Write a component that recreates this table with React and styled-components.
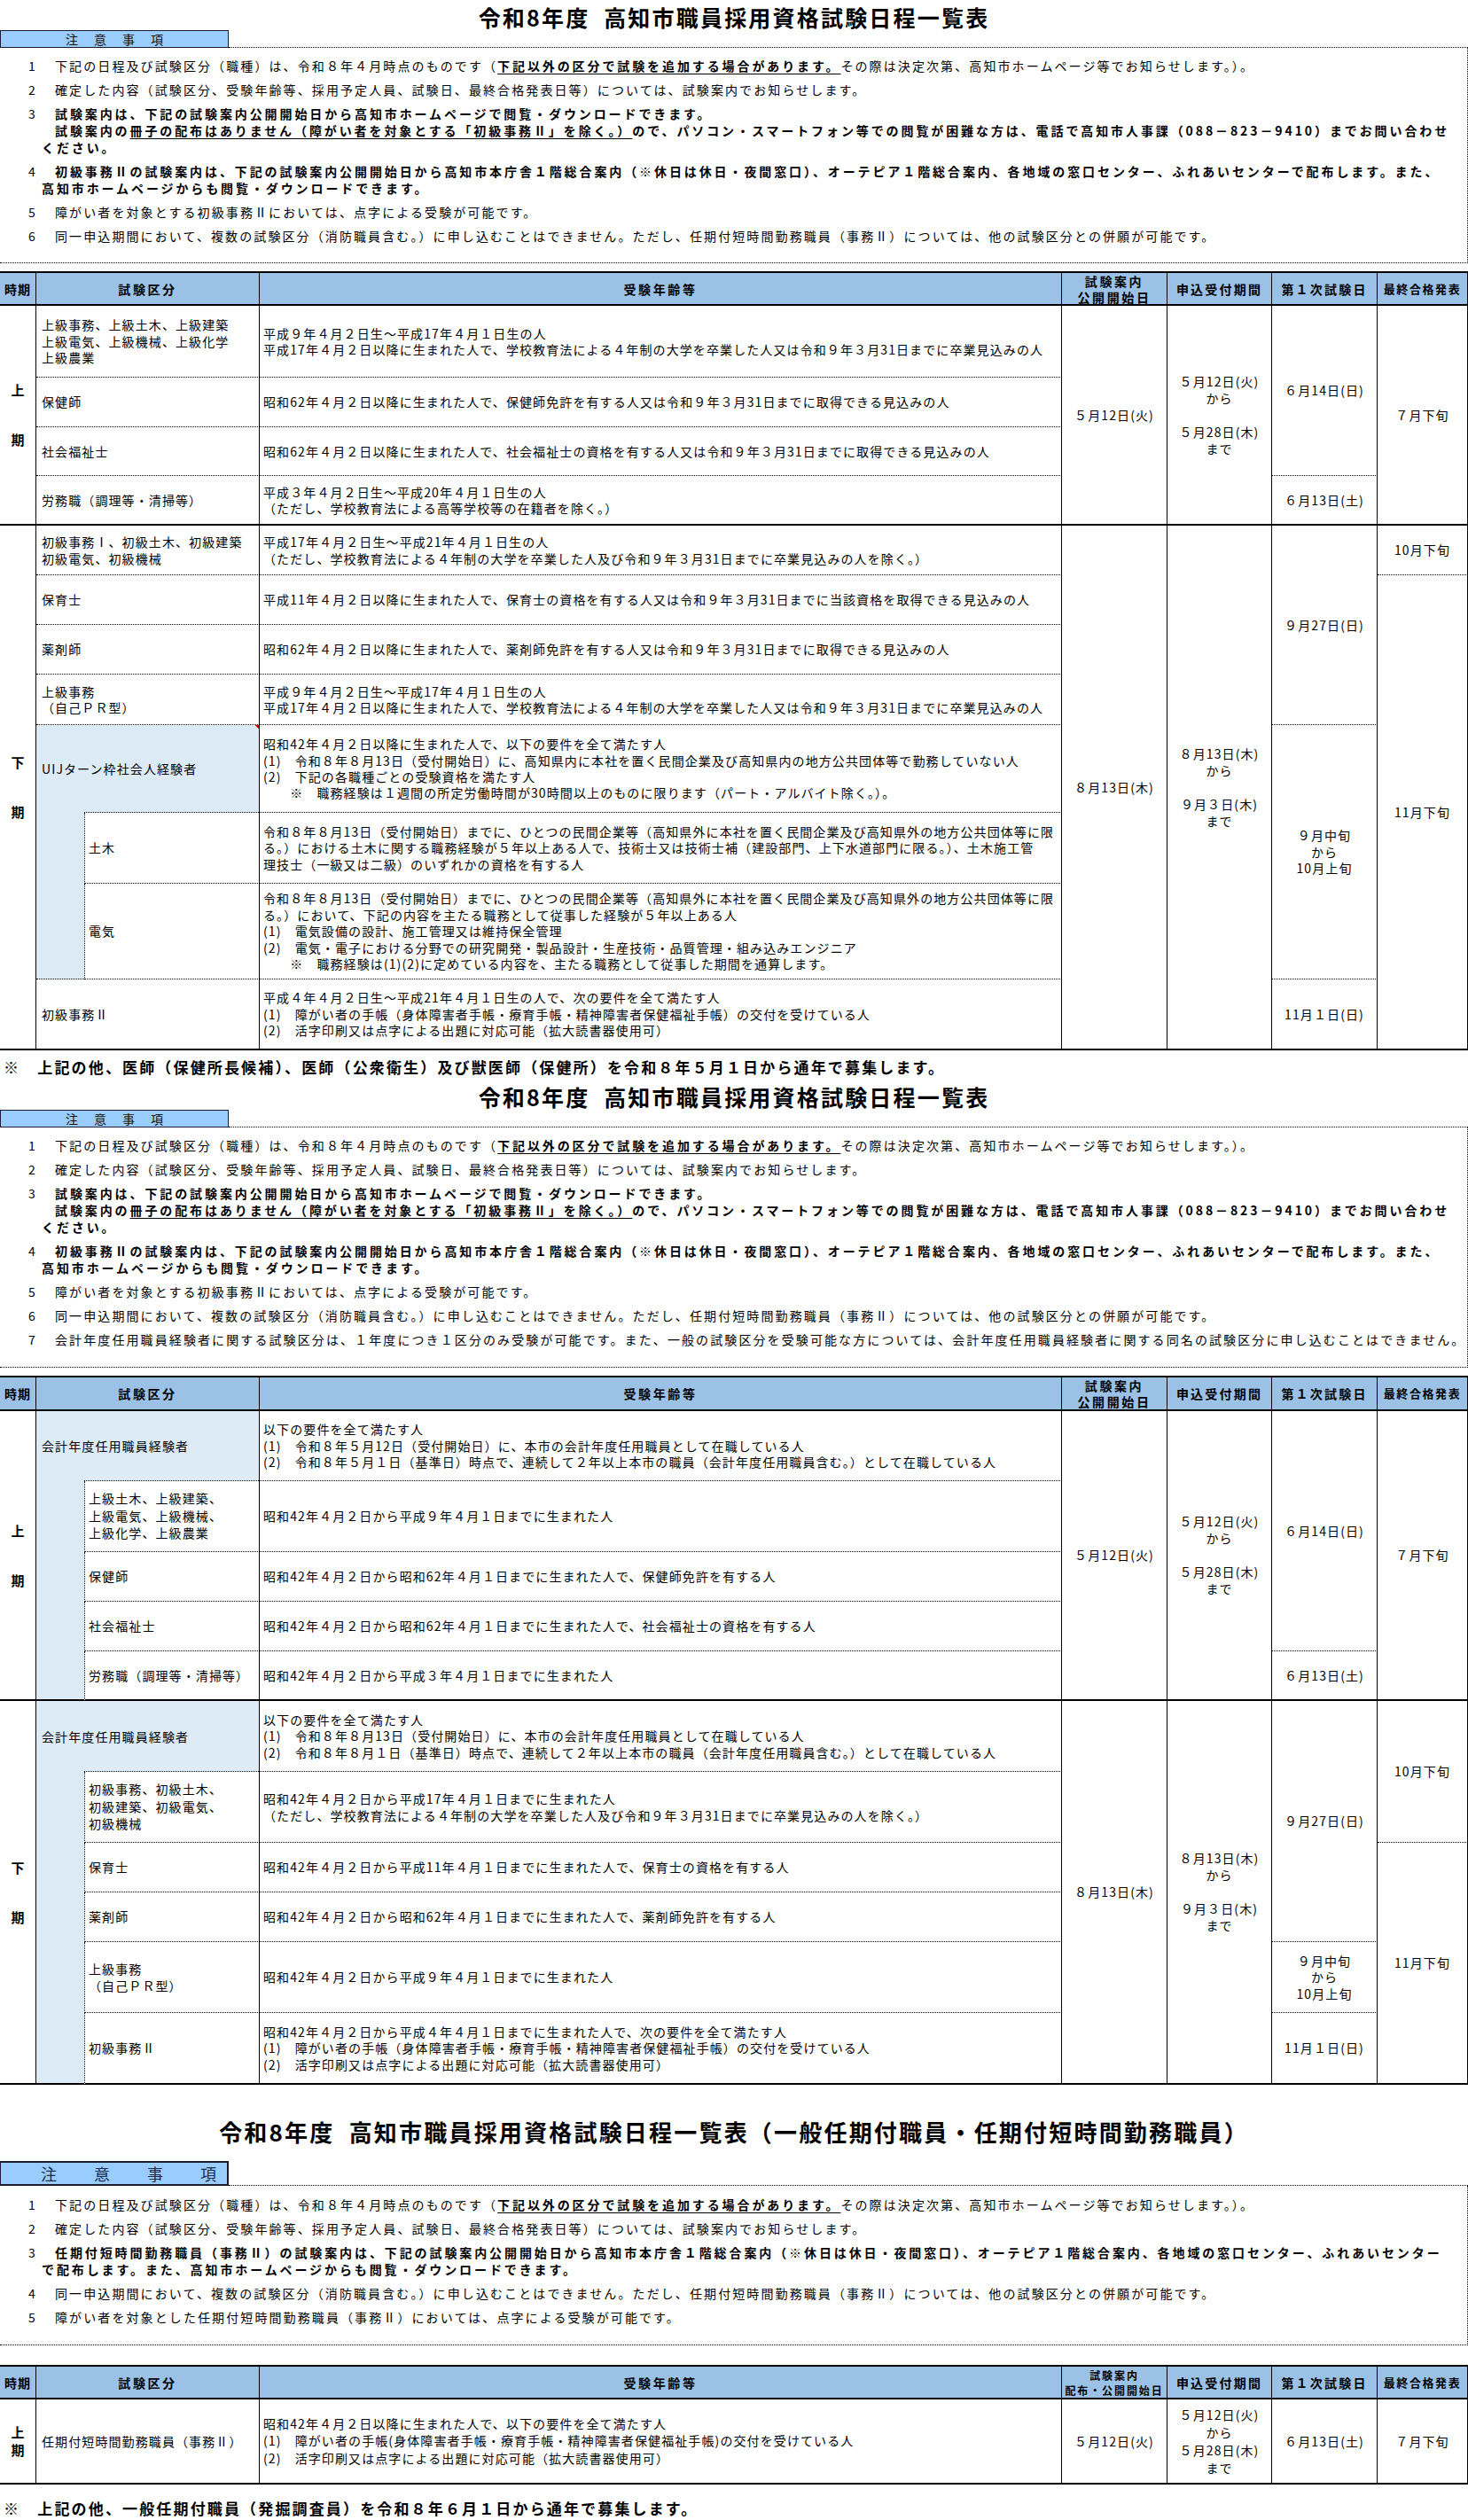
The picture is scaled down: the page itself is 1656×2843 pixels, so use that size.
import React from 'react';
import styled, { createGlobalStyle, css } from 'styled-components';

const FONT = `"Noto Sans CJK JP", "Noto Sans JP", "Noto Sans", sans-serif`;

const GlobalStyle = createGlobalStyle`
  html, body { margin: 0; padding: 0; background: #ffffff; }
  body { font-family: ${FONT}; color: #000; }
`;

const Page = styled.main`
  width: 1656px;
  min-height: 2843px;
  display: flex;
  flex-direction: column;
  font-family: ${FONT};
  color: #000;
`;

const Title = styled.h1`
  margin: 0;
  box-sizing: border-box;
  height: ${p => p.$h}px;
  padding-bottom: ${p => p.$pb || 0}px;
  display: flex;
  align-items: flex-end;
  justify-content: center;
  font-size: ${p => p.$fs || 25}px;
  letter-spacing: ${p => p.$ls ?? 2.2}px;
  line-height: 30px;
  font-weight: 700;
  white-space: pre;
`;

const NotesHead = styled.div`
  display: flex;
  height: ${p => p.$h}px;
`;

const NotesLabel = styled.div`
  box-sizing: border-box;
  width: 258px;
  border: ${p => p.$bw}px solid #1b1b34;
  border-left-width: 1px;
  background: #99ccff;
  display: flex;
  align-items: center;
  padding-left: ${p => p.$pl}px;
  font-size: ${p => p.$fs}px;
  letter-spacing: ${p => p.$ls}px;
  color: ${p => p.$color || '#111'};
  white-space: pre;
  line-height: 1;
`;

const NotesRule = styled.div`
  flex: 1;
  border-bottom: 1px dotted #000;
`;

const NoteList = styled.div`
  box-sizing: border-box;
  height: ${p => p.$h}px;
  padding: ${p => p.$pt || 11}px 0 0 32px;
  border-right: 1px dotted #000;
  border-bottom: 1px dotted #000;
  display: flex;
  flex-direction: column;
  gap: 8px;
  font-size: 14px;
  line-height: 19px;
`;

const NoteItem = styled.div`
  font-weight: ${p => (p.$bold ? 700 : 400)};
  letter-spacing: ${p => (p.$bold ? 2.9 : 2.1)}px;
`;

const NoteLine = styled.div`
  white-space: pre;
  padding-left: ${p => p.$indent || 0}px;
`;

const Num = styled.span`
  display: inline-block;
  width: 30px;
  font-weight: 400;
  letter-spacing: 0;
`;

const Em = styled.span`
  font-weight: 700;
  letter-spacing: 2.9px;
  text-decoration: underline;
  text-decoration-thickness: 1px;
  text-underline-offset: 3px;
`;

const Table = styled.div`
  display: grid;
  grid-template-columns: 41px 54px 198px 905px 119px 118px 119px 102px;
  grid-template-rows: ${p => p.$rows};
  margin-top: ${p => p.$mt}px;
  font-size: 14px;
  letter-spacing: 1.1px;
  line-height: 18.4px;
`;

const cellBase = css`
  box-sizing: border-box;
  grid-column: ${p => p.$c || 1} / span ${p => p.$cs || 1};
  grid-row: ${p => p.$r} / span ${p => p.$rs || 1};
  border-right: 1px solid #000;
  border-bottom: ${p => (p.$bb === 'solid' ? '2px solid #000' : '1px dotted #000')};
  display: flex;
  align-items: center;
  white-space: pre;
  min-width: 0;
  line-height: ${p => (p.$lh ? `${p.$lh}px` : 'inherit')};
`;

const HeadCell = styled.div`
  ${cellBase}
  border-top: 2px solid #000;
  border-bottom: 2px solid #000;
  background: #9bc2e6;
  justify-content: center;
  text-align: center;
  font-weight: 700;
  font-size: ${p => p.$fs || 14}px;
  letter-spacing: ${p => p.$ls ?? 2.6}px;
  line-height: ${p => p.$lh || 18}px;
`;

const TimeCell = styled.div`
  ${cellBase}
  justify-content: center;
  text-align: center;
  font-weight: 700;
  font-size: 15px;
  letter-spacing: 0;
`;

const KubunCell = styled.div`
  ${cellBase}
  padding-left: ${p => (p.$sub ? 4 : 6)}px;
  border-left: ${p => (p.$sub ? '1px dotted #000' : 'none')};
`;

const GroupCell = styled.div`
  ${cellBase}
  border-bottom: none;
  padding-left: 6px;
  background-color: #ddebf7;
  background-image: ${p => (p.$flag ? 'linear-gradient(225deg, #e00000 0 3.5px, transparent 3.5px), ' : '')}repeating-linear-gradient(to right, #000 0 1px, transparent 1px 2px);
  background-size: ${p => (p.$flag ? '6px 6px, ' : '')}calc(100% - 54px) 1px;
  background-position: ${p => (p.$flag ? 'right top, ' : '')}right bottom;
  background-repeat: no-repeat;
`;

const SideCell = styled.div`
  ${cellBase}
  border-right: none;
  background: #ddebf7;
`;

const AgeCell = styled.div`
  ${cellBase}
  padding-left: 4px;
`;

const DateCell = styled.div`
  ${cellBase}
  justify-content: center;
  text-align: center;
`;

const Footer = styled.p`
  margin: ${p => p.$mt}px 0 0;
  padding-left: 4px;
  font-size: 17px;
  font-weight: 700;
  letter-spacing: 2.15px;
  line-height: 20px;
  white-space: pre;
`;

const TITLE = '令和8年度  高知市職員採用資格試験日程一覧表';

function NoteOne() {
  return (
    <NoteItem>
      <NoteLine>
        <Num>1</Num>下記の日程及び試験区分（職種）は、令和８年４月時点のものです（<Em>下記以外の区分で試験を追加する場合があります。</Em>その際は決定次第、高知市ホームページ等でお知らせします。）。
      </NoteLine>
    </NoteItem>
  );
}

function NoteTwo() {
  return (
    <NoteItem>
      <NoteLine>
        <Num>2</Num>確定した内容（試験区分、受験年齢等、採用予定人員、試験日、最終合格発表日等）については、試験案内でお知らせします。
      </NoteLine>
    </NoteItem>
  );
}

function NoteGuide() {
  return (
    <NoteItem $bold>
      <NoteLine>
        <Num>3</Num>試験案内は、下記の試験案内公開開始日から高知市ホームページで閲覧・ダウンロードできます。
      </NoteLine>
      <NoteLine $indent={30}>
        試験案内の<Em>冊子の配布はありません（障がい者を対象とする「初級事務Ⅱ」を除く。）</Em>ので、パソコン・スマートフォン等での閲覧が困難な方は、電話で高知市人事課（088－823－9410）までお問い合わせ
      </NoteLine>
      <NoteLine $indent={15}>ください。</NoteLine>
    </NoteItem>
  );
}

function NoteDistribute() {
  return (
    <NoteItem $bold>
      <NoteLine>
        <Num>4</Num>初級事務Ⅱの試験案内は、下記の試験案内公開開始日から高知市本庁舎１階総合案内（※休日は休日・夜間窓口）、オーテピア１階総合案内、各地域の窓口センター、ふれあいセンターで配布します。また、
      </NoteLine>
      <NoteLine $indent={15}>高知市ホームページからも閲覧・ダウンロードできます。</NoteLine>
    </NoteItem>
  );
}

function NoteSimple({ n, children }) {
  return (
    <NoteItem>
      <NoteLine>
        <Num>{n}</Num>
        {children}
      </NoteLine>
    </NoteItem>
  );
}

const HEIGHEI = '同一申込期間において、複数の試験区分（消防職員含む。）に申し込むことはできません。ただし、任期付短時間勤務職員（事務Ⅱ）については、他の試験区分との併願が可能です。';

function Header({ dist }) {
  return (
    <>
      <HeadCell $c={1} $r={1} $ls={1}>時期</HeadCell>
      <HeadCell $c={2} $cs={2} $r={1}>試験区分</HeadCell>
      <HeadCell $c={4} $r={1}>受験年齢等</HeadCell>
      {dist ? (
        <HeadCell $c={5} $r={1} $fs={12} $ls={1.9} $lh={17}>{'試験案内\n配布・公開開始日'}</HeadCell>
      ) : (
        <HeadCell $c={5} $r={1}>{'試験案内\n公開開始日'}</HeadCell>
      )}
      <HeadCell $c={6} $r={1} $ls={2.2}>申込受付期間</HeadCell>
      <HeadCell $c={7} $r={1} $ls={2.2}>第１次試験日</HeadCell>
      <HeadCell $c={8} $r={1} $fs={13} $ls={1.6}>最終合格発表</HeadCell>
    </>
  );
}

const MOSHIKOMI_1 = '５月12日(火)\nから\n\n５月28日(木)\nまで';
const MOSHIKOMI_2 = '８月13日(木)\nから\n\n９月３日(木)\nまで';

function TableOne() {
  return (
    <Table $mt={9} $rows="39px 81px 56px 55px 56px 56px 56px 56px 57px 99px 80px 108px 80px">
      <Header />
      {/* 上期 */}
      <TimeCell $r={2} $rs={4} $bb="solid" $lh={56}>{'上\n期'}</TimeCell>
      <KubunCell $c={2} $cs={2} $r={2}>{'上級事務、上級土木、上級建築\n上級電気、上級機械、上級化学\n上級農業'}</KubunCell>
      <AgeCell $c={4} $r={2}>{'平成９年４月２日生～平成17年４月１日生の人\n平成17年４月２日以降に生まれた人で、学校教育法による４年制の大学を卒業した人又は令和９年３月31日までに卒業見込みの人'}</AgeCell>
      <KubunCell $c={2} $cs={2} $r={3}>保健師</KubunCell>
      <AgeCell $c={4} $r={3}>昭和62年４月２日以降に生まれた人で、保健師免許を有する人又は令和９年３月31日までに取得できる見込みの人</AgeCell>
      <KubunCell $c={2} $cs={2} $r={4}>社会福祉士</KubunCell>
      <AgeCell $c={4} $r={4}>昭和62年４月２日以降に生まれた人で、社会福祉士の資格を有する人又は令和９年３月31日までに取得できる見込みの人</AgeCell>
      <KubunCell $c={2} $cs={2} $r={5} $bb="solid">労務職（調理等・清掃等）</KubunCell>
      <AgeCell $c={4} $r={5} $bb="solid">{'平成３年４月２日生～平成20年４月１日生の人\n（ただし、学校教育法による高等学校等の在籍者を除く。）'}</AgeCell>
      <DateCell $c={5} $r={2} $rs={4} $bb="solid">５月12日(火)</DateCell>
      <DateCell $c={6} $r={2} $rs={4} $bb="solid" $lh={19}>{MOSHIKOMI_1}</DateCell>
      <DateCell $c={7} $r={2} $rs={3}>６月14日(日)</DateCell>
      <DateCell $c={7} $r={5} $bb="solid">６月13日(土)</DateCell>
      <DateCell $c={8} $r={2} $rs={4} $bb="solid">７月下旬</DateCell>

      {/* 下期 */}
      <TimeCell $r={6} $rs={8} $bb="solid" $lh={56}>{'下\n期'}</TimeCell>
      <KubunCell $c={2} $cs={2} $r={6}>{'初級事務Ⅰ、初級土木、初級建築\n初級電気、初級機械'}</KubunCell>
      <AgeCell $c={4} $r={6}>{'平成17年４月２日生～平成21年４月１日生の人\n（ただし、学校教育法による４年制の大学を卒業した人及び令和９年３月31日までに卒業見込みの人を除く。）'}</AgeCell>
      <KubunCell $c={2} $cs={2} $r={7}>保育士</KubunCell>
      <AgeCell $c={4} $r={7}>平成11年４月２日以降に生まれた人で、保育士の資格を有する人又は令和９年３月31日までに当該資格を取得できる見込みの人</AgeCell>
      <KubunCell $c={2} $cs={2} $r={8}>薬剤師</KubunCell>
      <AgeCell $c={4} $r={8}>昭和62年４月２日以降に生まれた人で、薬剤師免許を有する人又は令和９年３月31日までに取得できる見込みの人</AgeCell>
      <KubunCell $c={2} $cs={2} $r={9}>{'上級事務\n（自己ＰＲ型）'}</KubunCell>
      <AgeCell $c={4} $r={9}>{'平成９年４月２日生～平成17年４月１日生の人\n平成17年４月２日以降に生まれた人で、学校教育法による４年制の大学を卒業した人又は令和９年３月31日までに卒業見込みの人'}</AgeCell>
      <GroupCell $c={2} $cs={2} $r={10} $flag>UIJターン枠社会人経験者</GroupCell>
      <AgeCell $c={4} $r={10}>{'昭和42年４月２日以降に生まれた人で、以下の要件を全て満たす人\n(1)　令和８年８月13日（受付開始日）に、高知県内に本社を置く民間企業及び高知県内の地方公共団体等で勤務していない人\n(2)　下記の各職種ごとの受験資格を満たす人\n　　※　職務経験は１週間の所定労働時間が30時間以上のものに限ります（パート・アルバイト除く。）。'}</AgeCell>
      <SideCell $c={2} $r={11} $rs={2} />
      <KubunCell $c={3} $r={11} $sub>土木</KubunCell>
      <AgeCell $c={4} $r={11}>{'令和８年８月13日（受付開始日）までに、ひとつの民間企業等（高知県外に本社を置く民間企業及び高知県外の地方公共団体等に限\nる。）における土木に関する職務経験が５年以上ある人で、技術士又は技術士補（建設部門、上下水道部門に限る。）、土木施工管\n理技士（一級又は二級）のいずれかの資格を有する人'}</AgeCell>
      <KubunCell $c={3} $r={12} $sub>電気</KubunCell>
      <AgeCell $c={4} $r={12}>{'令和８年８月13日（受付開始日）までに、ひとつの民間企業等（高知県外に本社を置く民間企業及び高知県外の地方公共団体等に限\nる。）において、下記の内容を主たる職務として従事した経験が５年以上ある人\n(1)　電気設備の設計、施工管理又は維持保全管理\n(2)　電気・電子における分野での研究開発・製品設計・生産技術・品質管理・組み込みエンジニア\n　　※　職務経験は(1)(2)に定めている内容を、主たる職務として従事した期間を通算します。'}</AgeCell>
      <KubunCell $c={2} $cs={2} $r={13} $bb="solid">初級事務Ⅱ</KubunCell>
      <AgeCell $c={4} $r={13} $bb="solid">{'平成４年４月２日生～平成21年４月１日生の人で、次の要件を全て満たす人\n(1)　障がい者の手帳（身体障害者手帳・療育手帳・精神障害者保健福祉手帳）の交付を受けている人\n(2)　活字印刷又は点字による出題に対応可能（拡大読書器使用可）'}</AgeCell>
      <DateCell $c={5} $r={6} $rs={8} $bb="solid">８月13日(木)</DateCell>
      <DateCell $c={6} $r={6} $rs={8} $bb="solid" $lh={19}>{MOSHIKOMI_2}</DateCell>
      <DateCell $c={7} $r={6} $rs={4}>９月27日(日)</DateCell>
      <DateCell $c={7} $r={10} $rs={3}>{'９月中旬\nから\n10月上旬'}</DateCell>
      <DateCell $c={7} $r={13} $bb="solid">11月１日(日)</DateCell>
      <DateCell $c={8} $r={6}>10月下旬</DateCell>
      <DateCell $c={8} $r={7} $rs={7} $bb="solid">11月下旬</DateCell>
    </Table>
  );
}

function TableTwo() {
  return (
    <Table $mt={9} $rows="40px 79px 80px 56px 56px 56px 80px 80px 56px 56px 80px 81px">
      <Header />
      {/* 上期 */}
      <TimeCell $r={2} $rs={5} $bb="solid" $lh={56}>{'上\n期'}</TimeCell>
      <GroupCell $c={2} $cs={2} $r={2}>会計年度任用職員経験者</GroupCell>
      <AgeCell $c={4} $r={2}>{'以下の要件を全て満たす人\n(1)　令和８年５月12日（受付開始日）に、本市の会計年度任用職員として在職している人\n(2)　令和８年５月１日（基準日）時点で、連続して２年以上本市の職員（会計年度任用職員含む。）として在職している人'}</AgeCell>
      <SideCell $c={2} $r={3} $rs={4} $bb="solid" />
      <KubunCell $c={3} $r={3} $sub $lh={19.5}>{'上級土木、上級建築、\n上級電気、上級機械、\n上級化学、上級農業'}</KubunCell>
      <AgeCell $c={4} $r={3}>昭和42年４月２日から平成９年４月１日までに生まれた人</AgeCell>
      <KubunCell $c={3} $r={4} $sub>保健師</KubunCell>
      <AgeCell $c={4} $r={4}>昭和42年４月２日から昭和62年４月１日までに生まれた人で、保健師免許を有する人</AgeCell>
      <KubunCell $c={3} $r={5} $sub>社会福祉士</KubunCell>
      <AgeCell $c={4} $r={5}>昭和42年４月２日から昭和62年４月１日までに生まれた人で、社会福祉士の資格を有する人</AgeCell>
      <KubunCell $c={3} $r={6} $sub $bb="solid">労務職（調理等・清掃等）</KubunCell>
      <AgeCell $c={4} $r={6} $bb="solid">昭和42年４月２日から平成３年４月１日までに生まれた人</AgeCell>
      <DateCell $c={5} $r={2} $rs={5} $bb="solid">５月12日(火)</DateCell>
      <DateCell $c={6} $r={2} $rs={5} $bb="solid" $lh={19}>{MOSHIKOMI_1}</DateCell>
      <DateCell $c={7} $r={2} $rs={4}>６月14日(日)</DateCell>
      <DateCell $c={7} $r={6} $bb="solid">６月13日(土)</DateCell>
      <DateCell $c={8} $r={2} $rs={5} $bb="solid">７月下旬</DateCell>

      {/* 下期 */}
      <TimeCell $r={7} $rs={6} $bb="solid" $lh={56}>{'下\n期'}</TimeCell>
      <GroupCell $c={2} $cs={2} $r={7}>会計年度任用職員経験者</GroupCell>
      <AgeCell $c={4} $r={7}>{'以下の要件を全て満たす人\n(1)　令和８年８月13日（受付開始日）に、本市の会計年度任用職員として在職している人\n(2)　令和８年８月１日（基準日）時点で、連続して２年以上本市の職員（会計年度任用職員含む。）として在職している人'}</AgeCell>
      <SideCell $c={2} $r={8} $rs={5} $bb="solid" />
      <KubunCell $c={3} $r={8} $sub $lh={19.5}>{'初級事務、初級土木、\n初級建築、初級電気、\n初級機械'}</KubunCell>
      <AgeCell $c={4} $r={8}>{'昭和42年４月２日から平成17年４月１日までに生まれた人\n（ただし、学校教育法による４年制の大学を卒業した人及び令和９年３月31日までに卒業見込みの人を除く。）'}</AgeCell>
      <KubunCell $c={3} $r={9} $sub>保育士</KubunCell>
      <AgeCell $c={4} $r={9}>昭和42年４月２日から平成11年４月１日までに生まれた人で、保育士の資格を有する人</AgeCell>
      <KubunCell $c={3} $r={10} $sub>薬剤師</KubunCell>
      <AgeCell $c={4} $r={10}>昭和42年４月２日から昭和62年４月１日までに生まれた人で、薬剤師免許を有する人</AgeCell>
      <KubunCell $c={3} $r={11} $sub>{'上級事務\n（自己ＰＲ型）'}</KubunCell>
      <AgeCell $c={4} $r={11}>昭和42年４月２日から平成９年４月１日までに生まれた人</AgeCell>
      <KubunCell $c={3} $r={12} $sub $bb="solid">初級事務Ⅱ</KubunCell>
      <AgeCell $c={4} $r={12} $bb="solid">{'昭和42年４月２日から平成４年４月１日までに生まれた人で、次の要件を全て満たす人\n(1)　障がい者の手帳（身体障害者手帳・療育手帳・精神障害者保健福祉手帳）の交付を受けている人\n(2)　活字印刷又は点字による出題に対応可能（拡大読書器使用可）'}</AgeCell>
      <DateCell $c={5} $r={7} $rs={6} $bb="solid">８月13日(木)</DateCell>
      <DateCell $c={6} $r={7} $rs={6} $bb="solid" $lh={19}>{MOSHIKOMI_2}</DateCell>
      <DateCell $c={7} $r={7} $rs={4}>９月27日(日)</DateCell>
      <DateCell $c={7} $r={11}>{'９月中旬\nから\n10月上旬'}</DateCell>
      <DateCell $c={7} $r={12} $bb="solid">11月１日(日)</DateCell>
      <DateCell $c={8} $r={7} $rs={2}>10月下旬</DateCell>
      <DateCell $c={8} $r={9} $rs={4} $bb="solid">11月下旬</DateCell>
    </Table>
  );
}

function TableThree() {
  return (
    <Table $mt={22} $rows="39px 96px">
      <Header dist />
      <TimeCell $r={2} $bb="solid" $lh={20}>{'上\n期'}</TimeCell>
      <KubunCell $c={2} $cs={2} $r={2} $bb="solid">任期付短時間勤務職員（事務Ⅱ）</KubunCell>
      <AgeCell $c={4} $r={2} $bb="solid" $lh={19.5}>{'昭和42年４月２日以降に生まれた人で、以下の要件を全て満たす人\n(1)　障がい者の手帳(身体障害者手帳・療育手帳・精神障害者保健福祉手帳)の交付を受けている人\n(2)　活字印刷又は点字による出題に対応可能（拡大読書器使用可）'}</AgeCell>
      <DateCell $c={5} $r={2} $bb="solid">５月12日(火)</DateCell>
      <DateCell $c={6} $r={2} $bb="solid" $lh={20}>{'５月12日(火)\nから\n５月28日(木)\nまで'}</DateCell>
      <DateCell $c={7} $r={2} $bb="solid">６月13日(土)</DateCell>
      <DateCell $c={8} $r={2} $bb="solid">７月下旬</DateCell>
    </Table>
  );
}

export default function App() {
  return (
    <>
      <GlobalStyle />
      <Page>
        {/* Section 1 */}
        <Title $h={34}>{TITLE}</Title>
        <NotesHead $h={20}>
          <NotesLabel $bw={1} $pl={73} $fs={14} $ls={2}>注　意　事　項</NotesLabel>
          <NotesRule />
        </NotesHead>
        <NoteList $h={243}>
          <NoteOne />
          <NoteTwo />
          <NoteGuide />
          <NoteDistribute />
          <NoteSimple n="5">障がい者を対象とする初級事務Ⅱにおいては、点字による受験が可能です。</NoteSimple>
          <NoteSimple n="6">{HEIGHEI}</NoteSimple>
        </NoteList>
        <TableOne />
        <Footer $mt={9}>※　上記の他、医師（保健所長候補）、医師（公衆衛生）及び獣医師（保健所）を令和８年５月１日から通年で募集します。</Footer>

        {/* Section 2 */}
        <Title $h={38}>{TITLE}</Title>
        <NotesHead $h={20}>
          <NotesLabel $bw={1} $pl={73} $fs={14} $ls={2}>注　意　事　項</NotesLabel>
          <NotesRule />
        </NotesHead>
        <NoteList $h={271}>
          <NoteOne />
          <NoteTwo />
          <NoteGuide />
          <NoteDistribute />
          <NoteSimple n="5">障がい者を対象とする初級事務Ⅱにおいては、点字による受験が可能です。</NoteSimple>
          <NoteSimple n="6">{HEIGHEI}</NoteSimple>
          <NoteSimple n="7">会計年度任用職員経験者に関する試験区分は、１年度につき１区分のみ受験が可能です。また、一般の試験区分を受験可能な方については、会計年度任用職員経験者に関する同名の試験区分に申し込むことはできません。</NoteSimple>
        </NoteList>
        <TableTwo />

        {/* Section 3 */}
        <Title $h={86} $pb={18} $fs={26} $ls={2.2}>令和8年度  高知市職員採用資格試験日程一覧表（一般任期付職員・任期付短時間勤務職員）</Title>
        <NotesHead $h={28}>
          <NotesLabel $bw={2} $pl={45} $fs={18} $ls={2} $color="#1d2c4a">注　　意　　事　　項</NotesLabel>
          <NotesRule />
        </NotesHead>
        <NoteList $h={180} $pt={12}>
          <NoteOne />
          <NoteTwo />
          <NoteItem $bold>
            <NoteLine>
              <Num>3</Num>任期付短時間勤務職員（事務Ⅱ）の試験案内は、下記の試験案内公開開始日から高知市本庁舎１階総合案内（※休日は休日・夜間窓口）、オーテピア１階総合案内、各地域の窓口センター、ふれあいセンター
            </NoteLine>
            <NoteLine $indent={15}>で配布します。また、高知市ホームページからも閲覧・ダウンロードできます。</NoteLine>
          </NoteItem>
          <NoteSimple n="4">{HEIGHEI}</NoteSimple>
          <NoteSimple n="5">障がい者を対象とした任期付短時間勤務職員（事務Ⅱ）においては、点字による受験が可能です。</NoteSimple>
        </NoteList>
        <TableThree />
        <Footer $mt={17}>※　上記の他、一般任期付職員（発掘調査員）を令和８年６月１日から通年で募集します。</Footer>
      </Page>
    </>
  );
}
